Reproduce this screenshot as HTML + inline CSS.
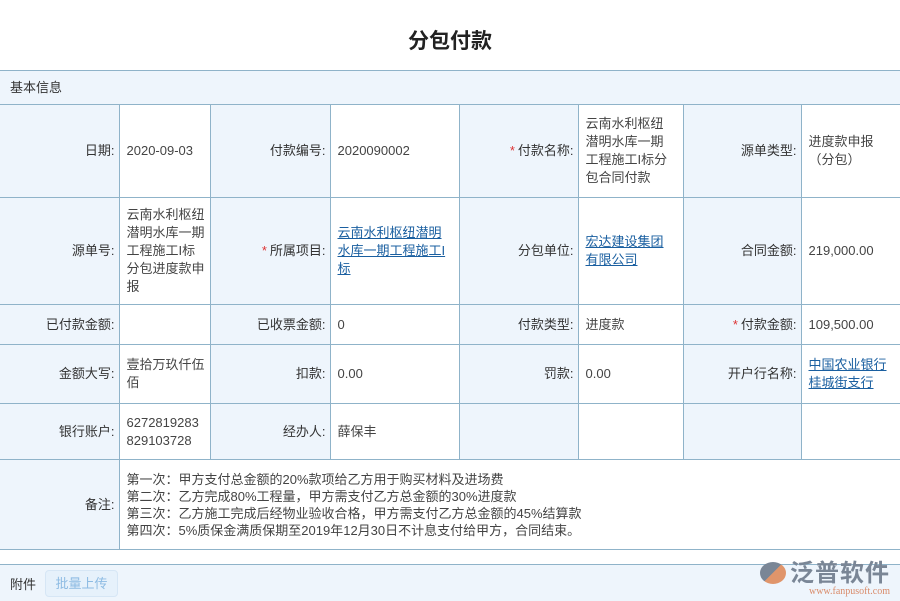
<!DOCTYPE html>
<html><head><meta charset="utf-8"><style>
body{margin:0;width:900px;height:600px;background:#fff;font-family:"Liberation Sans","Noto Sans CJK SC",sans-serif;color:#444;font-size:13px;position:relative;overflow:hidden}
.title{position:absolute;top:25px;left:0;width:900px;text-align:center;font-size:21px;font-weight:bold;color:#222}
.hdr{position:absolute;top:70px;left:0;width:900px;height:33px;background:#eef5fc;border-top:1px solid #8fb3c9;border-bottom:1px solid #8fb3c9;line-height:33px;text-indent:10px;color:#333}
table{position:absolute;top:104px;left:0;border-collapse:collapse;table-layout:fixed;width:900px}
td{border:1px solid #8fb3c9;padding:0 9px 0 7px;line-height:18px;vertical-align:middle;word-break:break-all}
td.n{padding-right:5px}
td.l{background:#eef5fc;text-align:right;padding-right:4px;color:#333}
tr td:first-child{border-left:none}
tr td:last-child{border-right:none}
.s{color:#d33;margin-right:3px}
a{color:#1a5fa0;text-decoration:underline}
.att{position:absolute;top:564px;left:0;width:900px;height:36px;background:#eef5fc;border-top:1px solid #8fb3c9}
.att span{position:absolute;left:10px;top:9px;color:#333}
.btn{position:absolute;left:45px;top:5px;width:71px;height:25px;border:1px solid #d6e6f5;border-radius:4px;background:#e6f1fb;color:#8dbbe3;text-align:center;line-height:25px}
.logo{position:absolute;right:10px;top:553px;text-align:right}
</style></head><body>
<div class="title">分包付款</div>
<div class="hdr">基本信息</div>
<table>
<colgroup><col style="width:119px"><col style="width:91px"><col style="width:120px"><col style="width:129px"><col style="width:119px"><col style="width:105px"><col style="width:118px"><col style="width:99px"></colgroup>
<tr style="height:93px"><td class="l">日期:</td><td class="n">2020-09-03</td><td class="l">付款编号:</td><td>2020090002</td><td class="l"><span class="s">*</span>付款名称:</td><td>云南水利枢纽潜明水库一期工程施工I标分包合同付款</td><td class="l">源单类型:</td><td>进度款申报（分包）</td></tr>
<tr style="height:107px"><td class="l">源单号:</td><td class="n">云南水利枢纽潜明水库一期工程施工I标分包进度款申报</td><td class="l"><span class="s">*</span>所属项目:</td><td><a>云南水利枢纽潜明水库一期工程施工I标</a></td><td class="l">分包单位:</td><td><a>宏达建设集团有限公司</a></td><td class="l">合同金额:</td><td>219,000.00</td></tr>
<tr style="height:40px"><td class="l">已付款金额:</td><td class="n"></td><td class="l">已收票金额:</td><td>0</td><td class="l">付款类型:</td><td>进度款</td><td class="l"><span class="s">*</span>付款金额:</td><td>109,500.00</td></tr>
<tr style="height:59px"><td class="l">金额大写:</td><td class="n">壹拾万玖仟伍佰</td><td class="l">扣款:</td><td>0.00</td><td class="l">罚款:</td><td>0.00</td><td class="l">开户行名称:</td><td><a>中国农业银行桂城街支行</a></td></tr>
<tr style="height:56px"><td class="l">银行账户:</td><td class="n">6272819283829103728</td><td class="l">经办人:</td><td>薛保丰</td><td class="l"></td><td></td><td class="l"></td><td></td></tr>
<tr style="height:90px"><td class="l">备注:</td><td colspan="7" style="background:#fff;line-height:17px">第一次：甲方支付总金额的20%款项给乙方用于购买材料及进场费<br>第二次：乙方完成80%工程量，甲方需支付乙方总金额的30%进度款<br>第三次：乙方施工完成后经物业验收合格，甲方需支付乙方总金额的45%结算款<br>第四次：5%质保金满质保期至2019年12月30日不计息支付给甲方，合同结束。</td></tr>
</table>
<div class="att"><span>附件</span><div class="btn">批量上传</div></div>
<div class="logo"><div style="font-size:24px;font-weight:bold;color:#7a8696;letter-spacing:1px"><span style="display:inline-block;width:26px;height:22px;border-radius:50%;background:linear-gradient(135deg,#7a8696 50%,#e0956b 50%);vertical-align:-3px;margin-right:4px"></span>泛普软件</div><div style="font-size:10px;color:#d98b6a;font-family:'Liberation Serif',serif;margin-top:-2px">www.fanpusoft.com</div></div>
</body></html>
